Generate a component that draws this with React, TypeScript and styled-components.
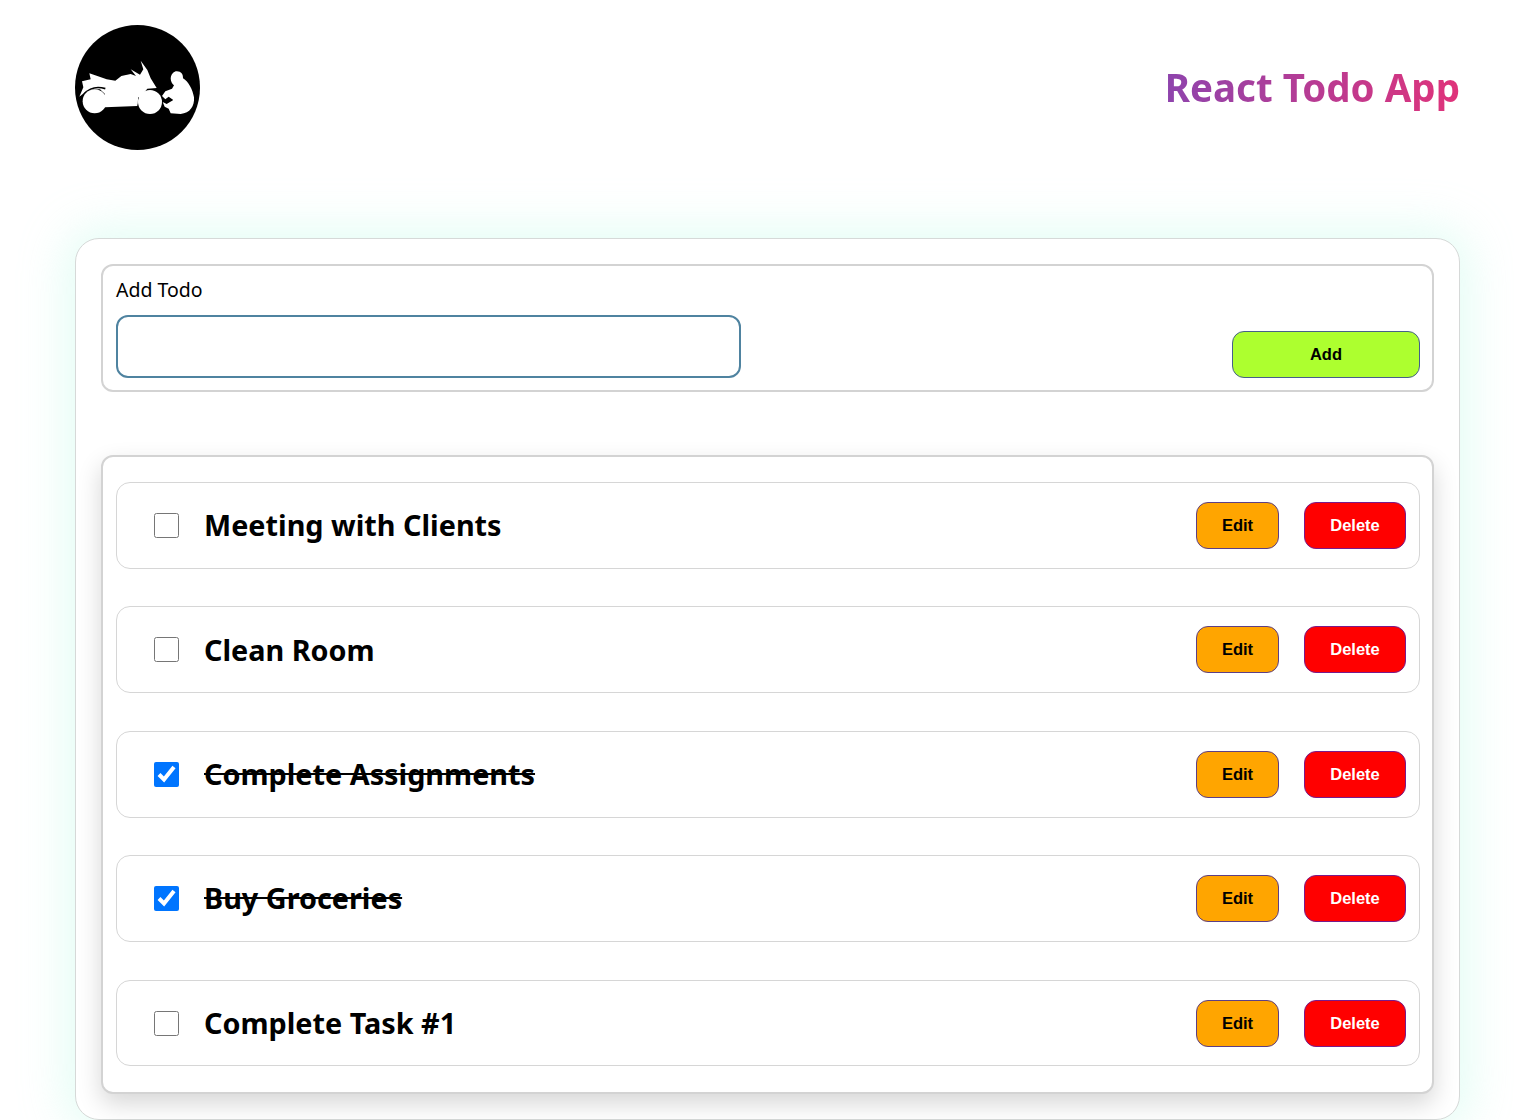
import React from "react";
import styled, { createGlobalStyle } from "styled-components";

const Global = createGlobalStyle`
  html, body { margin: 0; padding: 0; background: #fff; }
  body { font-family: "Noto Sans", "Liberation Sans", sans-serif; overflow: hidden; height: 1120px; }
`;

const Page = styled.div`
  width: 1514px;
  height: 1120px;
  overflow: hidden;
  box-sizing: border-box;
  padding: 25px 54px 0 75px;
`;

const Header = styled.header`
  display: flex;
  align-items: center;
  justify-content: space-between;
  height: 125px;
  margin-bottom: 88px;
`;

const Logo = styled.svg`
  width: 125px;
  height: 125px;
  display: block;
`;

const Title = styled.h1`
  margin: 0;
  font-family: "Noto Sans", sans-serif;
  font-size: 38.5px;
  line-height: 1.2;
  font-weight: 700;
  background: linear-gradient(90deg, #8e44ad, #e0337a);
  -webkit-background-clip: text;
  background-clip: text;
  color: transparent;
`;

const Card = styled.main`
  box-sizing: border-box;
  height: 882px;
  width: 1385px;
  padding: 25px;
  border: 1px solid #d6d9d8;
  border-radius: 24px;
  background: #fff;
  box-shadow: 0 0 45px 10px rgba(190, 250, 232, 0.42);
`;

const Form = styled.form`
  box-sizing: border-box;
  height: 128px;
  border: 2px solid #d3d3d3;
  border-radius: 12px;
  padding: 13px 12px 12px 13px;
  display: flex;
  align-items: flex-end;
  justify-content: space-between;
  margin-bottom: 63px;
`;

const Field = styled.label`
  display: flex;
  flex-direction: column;
  gap: 13px;
  font-size: 19.5px;
  line-height: 24px;
  color: #000;
`;

const TextInput = styled.input`
  box-sizing: border-box;
  width: 625px;
  height: 63px;
  border: 2px solid #4f83a0;
  border-radius: 12px;
  background: #fff;
  outline: none;
`;

const Btn = styled.button<{ $bg: string; $fg: string; $w: number; $line: string }>`
  box-sizing: border-box;
  width: ${(p) => p.$w}px;
  height: 47px;
  border: 1px solid ${(p) => p.$line};
  border-radius: 12px;
  background: ${(p) => p.$bg};
  color: ${(p) => p.$fg};
  font-family: "Liberation Sans", Arial, sans-serif;
  font-size: 16.5px;
  font-weight: 700;
  padding: 0;
`;

const List = styled.section`
  box-sizing: border-box;
  height: 639px;
  border: 2px solid #d3d3d3;
  border-radius: 12px;
  padding: 25px 12px 25px 13px;
  display: flex;
  flex-direction: column;
  gap: 37.5px;
  box-shadow: 0 10px 25px rgba(0, 0, 0, 0.16);
  background: #fff;
`;

const Row = styled.article`
  box-sizing: border-box;
  height: 86.9px;
  flex: none;
  border: 1px solid #d6d6d6;
  border-radius: 14px;
  padding: 0 13px 0 37px;
  display: flex;
  align-items: center;
`;

const Check = styled.input`
  width: 25px;
  height: 25px;
  margin: 0 25px 0 0;
  flex: none;
`;

const TodoText = styled.span<{ $done: boolean }>`
  flex: 1;
  font-size: 28.8px;
  font-weight: 700;
  line-height: 1.2;
  color: #000;
  text-decoration: ${(p) => (p.$done ? "line-through" : "none")};
`;

const Actions = styled.div`
  display: flex;
  gap: 25px;
`;

const todos = [
  { text: "Meeting with Clients", done: false },
  { text: "Clean Room", done: false },
  { text: "Complete Assignments", done: true },
  { text: "Buy Groceries", done: true },
  { text: "Complete Task #1", done: false },
];

export default function App() {
  return (
    <Page>
      <Global />
      <Header>
        <Logo viewBox="45 45 375 375" aria-label="logo">
          <circle cx="232.5" cy="232.5" r="187.5" fill="#000" />
          <path
            fill="#fff"
            d="M58 260 L70 232 L66 214 L92 208 L88 190 L112 198 L140 208 L166 212 L184 198 L212 192 L228 198 L212 178 L240 194 L250 178 L242 152 L262 180 L272 205 L290 234 L262 236 L252 248 L238 264 L232 288 L135 292 L135 252 L120 238 L96 238 L76 246 Z"
          />
          <path fill="none" stroke="#000" strokeWidth="5" d="M72 252 Q98 224 136 236" />
          <circle cx="104" cy="274" r="36" fill="#fff" />
          <path fill="none" stroke="#000" strokeWidth="3" d="M236 262 L234 292" />
          <circle cx="270" cy="276" r="36" fill="#fff" />
          <path
            fill="#fff"
            d="M347 184 C362 182 370 192 369 205 C386 214 398 240 402 262 C404 288 390 310 362 312 L332 310 L326 296 L314 290 L308 276 L320 282 L340 270 L326 260 L316 268 L306 258 L316 244 L336 236 L342 226 C330 218 326 192 347 184 Z"
          />
        </Logo>
        <Title>React Todo App</Title>
      </Header>
      <Card>
        <Form>
          <Field>
            Add Todo
            <TextInput type="text" />
          </Field>
          <Btn type="button" $bg="#adff2f" $fg="#000" $w={188} $line="#46608a">
            Add
          </Btn>
        </Form>
        <List>
          {todos.map((t) => (
            <Row key={t.text}>
              <Check type="checkbox" defaultChecked={t.done} />
              <TodoText $done={t.done}>{t.text}</TodoText>
              <Actions>
                <Btn type="button" $bg="#ffa500" $fg="#000" $w={83} $line="#5c3f86">
                  Edit
                </Btn>
                <Btn type="button" $bg="#ff0000" $fg="#fff" $w={102} $line="#7a1a8a">
                  Delete
                </Btn>
              </Actions>
            </Row>
          ))}
        </List>
      </Card>
    </Page>
  );
}
